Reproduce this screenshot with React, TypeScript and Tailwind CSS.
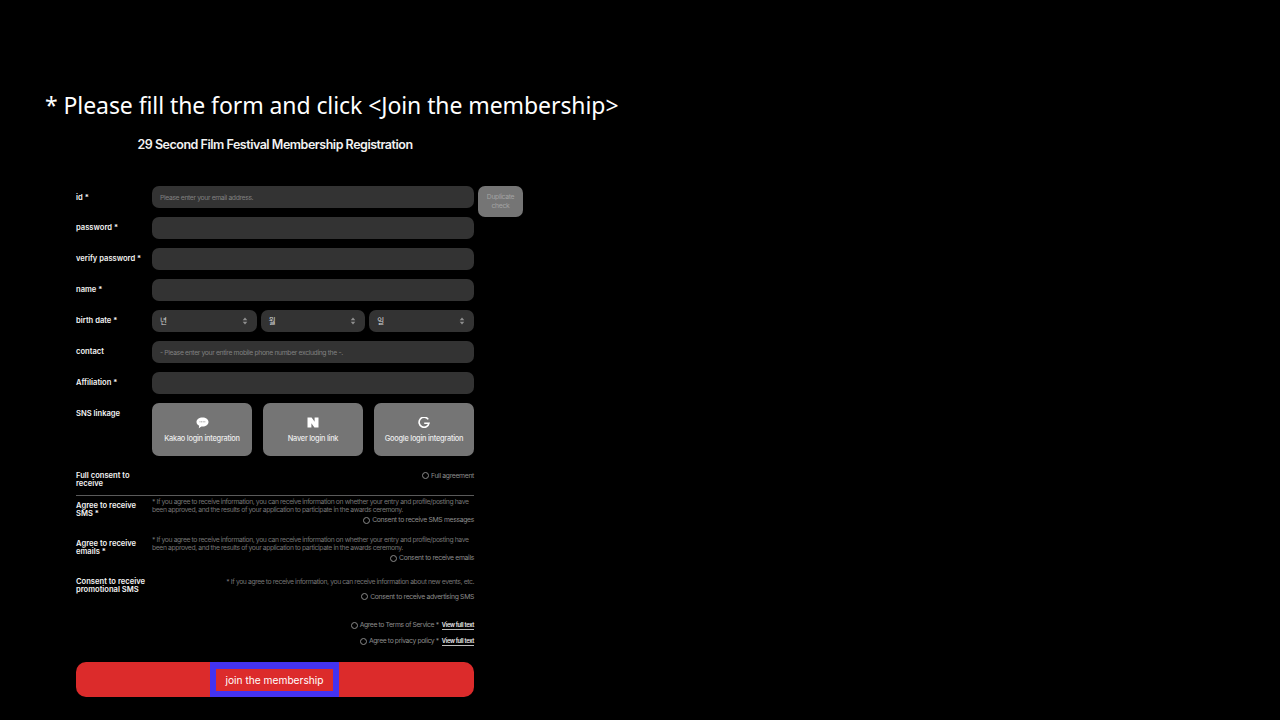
const labelCls = 'w-[76px] shrink-0 text-[7.6px] leading-[8px] font-semibold text-[#f3f3f3]'
const noteCls = 'text-[6.8px] leading-[7.5px] text-[#757575] tracking-[-0.4px]'
const NOTE = '* If you agree to receive information, you can receive information on whether your entry and profile/posting have been approved, and the results of your application to participate in the awards ceremony.'

function Radio({ text, className = '' }: { text: string; className?: string }) {
    return (
        <div className={`flex items-center justify-end gap-[2px] ${className}`}>
            <span className="w-[7px] h-[7px] rounded-full border border-[#8a8a8a]" />
            <span className="text-[6.8px] leading-[8px] text-[#8c8c8c] tracking-[-0.32px]">{text}</span>
        </div>
    )
}

function Field({ label, placeholder, labelClass = 'pt-[7px]' }: { label: string; placeholder?: string; labelClass?: string }) {
    return (
        <div className="flex h-[22px] mb-[9px]">
            <div className={`${labelCls} ${labelClass}`}>{label}</div>
            <div className="flex-1 rounded-[7px] bg-[#333333] flex items-center pl-[8px] pt-[2px] text-[6.8px] text-[#808080] tracking-[-0.36px]">
                {placeholder}
            </div>
        </div>
    )
}

function SelectBox({ text }: { text: string }) {
    return (
        <div className="flex-1 h-[22px] rounded-[7px] bg-[#333333] flex items-center justify-between pl-[8px] pr-[9px]">
            <span className="text-[7.5px] text-[#d8d8d8] font-['Noto_Sans_CJK_KR',sans-serif]">{text}</span>
            <svg width="6" height="8" viewBox="0 0 6 8" fill="#8f8f8f">
                <path d="M3 0.5 5.3 3.2H0.7Z" />
                <path d="M3 7.5 0.7 4.8H5.3Z" />
            </svg>
        </div>
    )
}

function SnsCard({ text, children }: { text: string; children: React.ReactNode }) {
    return (
        <div className="w-[100px] h-[53px] rounded-[7px] bg-[#757575] flex flex-col items-center pt-[13px]">
            <div className="h-[13px] flex items-center justify-center">{children}</div>
            <div className="mt-[5px] text-[7.4px] leading-[10px] text-[#ececec] tracking-[-0.25px] font-medium">{text}</div>
        </div>
    )
}

function TermsLine({ text }: { text: string }) {
    return (
        <div className="flex items-center justify-end gap-[2px] h-[8px]">
            <span className="w-[7px] h-[7px] rounded-full border border-[#8a8a8a]" />
            <span className="text-[6.8px] text-[#8c8c8c] tracking-[-0.38px]">{text} *</span>
            <span className="ml-[1px] text-[5.8px] leading-[8px] font-semibold text-[#f0f0f0] border-b border-[#bdbdbd] tracking-[-0.3px]">View full text</span>
        </div>
    )
}

export default function App() {
    return (
        <div className="w-[1280px] h-[720px] bg-black overflow-hidden font-['Inter',sans-serif] flex flex-col">
            <h1 className="mt-[87px] ml-[45px] h-[36px] text-[23px] leading-[36px] text-white font-['Noto_Sans',sans-serif] whitespace-nowrap tracking-[-0.08px]">
                {'* Please fill the form and click <Join the membership>'}
            </h1>
            <div className="ml-[76px] w-[398px] flex flex-col">
                <h2 className="mt-[13px] h-[18px] text-center text-[12.5px] leading-[18px] font-semibold text-[#f2f2f2] tracking-[-0.48px] whitespace-nowrap">
                    29 Second Film Festival Membership Registration
                </h2>

                <div className="mt-[32px]">
                    <div className="relative">
                        <Field label="id *" placeholder="Please enter your email address." labelClass="pt-[8px]" />
                        <div className="absolute left-[402px] top-0 w-[45px] h-[31px] rounded-[7px] bg-[#757575] flex items-center justify-center text-center text-[6.8px] leading-[8.5px] tracking-[-0.32px] text-[#a3a3a3]">
                            Duplicate<br />check
                        </div>
                    </div>
                    <Field label="password *" />
                    <Field label="verify password *" />
                    <Field label="name *" />
                    <div className="flex h-[22px] mb-[9px]">
                        <div className={`${labelCls} pt-[7px]`}>birth date *</div>
                        <div className="flex-1 flex gap-[4px]">
                            <SelectBox text="년" />
                            <SelectBox text="월" />
                            <SelectBox text="일" />
                        </div>
                    </div>
                    <Field label="contact" placeholder="- Please enter your entire mobile phone number excluding the -." />
                    <Field label="Affiliation *" />
                    <div className="flex">
                        <div className={`${labelCls} pt-[7px]`}>SNS linkage</div>
                        <div className="flex-1 flex justify-between">
                            <SnsCard text="Kakao login integration">
                                <svg width="13" height="12" viewBox="0 0 13 12">
                                    <path d="M6.5 0.5C3 0.5 0.5 2.5 0.5 5C0.5 6.7 1.6 8 3.2 8.8L2.8 11.2L5.4 9.4C5.8 9.5 6.1 9.5 6.5 9.5C10 9.5 12.5 7.5 12.5 5C12.5 2.5 10 0.5 6.5 0.5Z" fill="#ffffff" />
                                    <path d="M3.5 4.8H9.5" stroke="#9a9a9a" strokeWidth="1" strokeDasharray="1 0.6" />
                                </svg>
                            </SnsCard>
                            <SnsCard text="Naver login link">
                                <svg width="12" height="11" viewBox="0 0 12 11">
                                    <path d="M0.5 0.5H4.6L7.6 4.8V0.5H11.5V10.5H7.4L4.4 6.2V10.5H0.5Z" fill="#ffffff" />
                                </svg>
                            </SnsCard>
                            <SnsCard text="Google login integration">
                                <svg width="12" height="12" viewBox="0 0 12 12" fill="none">
                                    <path d="M10.2 2.4A5 5 0 1 0 11 6.2H6.2" stroke="#ffffff" strokeWidth="1.6" />
                                </svg>
                            </SnsCard>
                        </div>
                    </div>
                </div>

                <div className="mt-[15px] flex border-b border-[#5a5a5a] h-[25px]">
                    <div className={`${labelCls} !w-[70px] pt-[1px]`}>Full consent to receive</div>
                    <Radio text="Full agreement" className="flex-1 !items-start pt-[1px]" />
                </div>

                <div className="mt-[1px] h-[38px] flex">
                    <div className={`${labelCls} pt-[5px]`}>Agree to receive SMS *</div>
                    <div className="flex-1 pt-[1px]">
                        <div className={noteCls}>{NOTE}</div>
                        <Radio text="Consent to receive SMS messages" className="mt-[3px]" />
                    </div>
                </div>
                <div className="h-[38px] flex">
                    <div className={`${labelCls} pt-[5px]`}>Agree to receive emails *</div>
                    <div className="flex-1 pt-[1px]">
                        <div className={noteCls}>{NOTE}</div>
                        <Radio text="Consent to receive emails" className="mt-[3px]" />
                    </div>
                </div>
                <div className="h-[47px] flex">
                    <div className={`${labelCls} pt-[5px]`}>Consent to receive promotional SMS</div>
                    <div className="flex-1 pt-[5px]">
                        <div className={`${noteCls} text-right`}>* If you agree to receive information, you can receive information about new events, etc.</div>
                        <Radio text="Consent to receive advertising SMS" className="mt-[7px]" />
                    </div>
                </div>

                <div className="mt-[1px] flex flex-col gap-[8px]">
                    <TermsLine text="Agree to Terms of Service" />
                    <TermsLine text="Agree to privacy policy" />
                </div>

                <div className="mt-[17px] h-[35px] rounded-[10px] bg-[#dc2b2b] flex items-center justify-center">
                    <div className="w-[129px] h-[35px] mr-[1px] border-[6px] border-t-[7px] border-[#4433f0] flex items-center justify-center text-[10.2px] pt-[1px] text-white whitespace-nowrap">
                        join the membership
                    </div>
                </div>
            </div>
        </div>
    )
}
